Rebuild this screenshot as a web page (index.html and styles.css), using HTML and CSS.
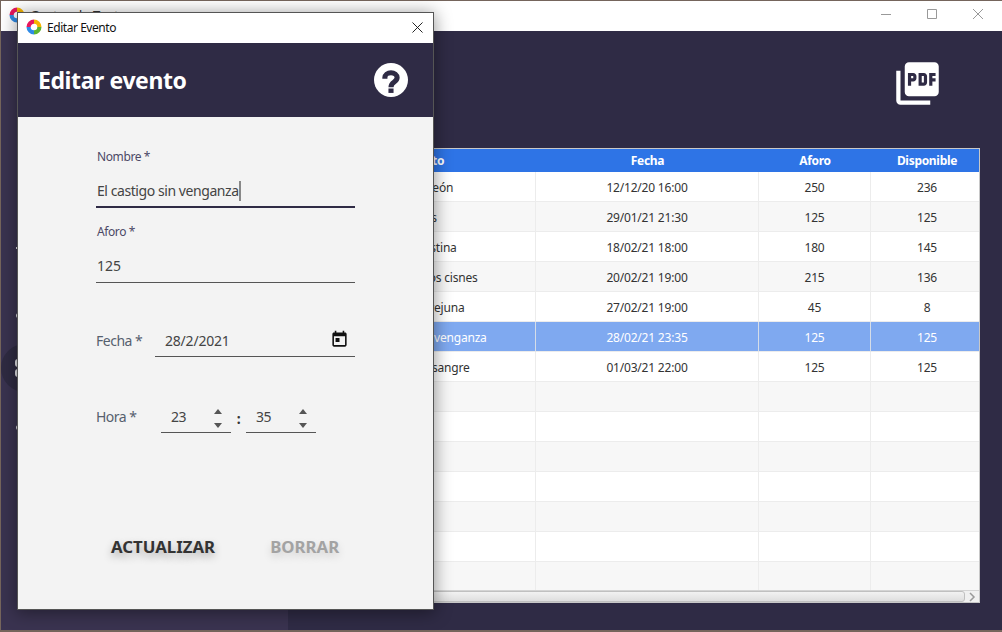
FILE: index.html
```html
<!DOCTYPE html>
<html lang="es">
<head>
<meta charset="utf-8">
<title>Editar Evento</title>
<link rel="stylesheet" href="styles.css">
</head>
<body>
<div class="window">
  <div class="titlebar">
    <svg class="app-icon" viewBox="0 0 16 16"><path d="M2.600 8A5.400 5.400 0 0 1 8 2.600" stroke="#e8175d"/><path d="M8 2.600A5.400 5.400 0 0 1 13.400 8" stroke="#f7b500"/><path d="M13.400 8A5.400 5.400 0 0 1 8 13.400" stroke="#5cb531"/><path d="M8 13.400A5.400 5.400 0 0 1 2.600 8" stroke="#2f8be6"/></svg>
    <span class="window-name">Gestor de Teatro</span>
    <div class="window-buttons">
      <svg viewBox="0 0 46 16"><path d="M17 7.500H27"/></svg>
      <svg viewBox="0 0 46 16"><path d="M17.500 2.500H26.500V11.500H17.500Z"/></svg>
      <svg viewBox="0 0 46 16"><path d="M17 2L27 12M27 2L17 12"/></svg>
    </div>
  </div>
  <div class="main">
    <nav class="sidebar">
      <span class="mark mark-small"></span>
      <span class="mark mark-medium"></span>
      <div class="active-item">
        <span class="blob"></span>
        <span class="blob"></span>
      </div>
      <span class="mark mark-last"></span>
    </nav>
    <section class="content">
      <div class="toolbar">
        <svg class="pdf-icon" viewBox="0 0 24 24"><path d="M20 2H8c-1.100 0-2 .9-2 2v12c0 1.100.9 2 2 2h12c1.100 0 2-.9 2-2V4c0-1.100-.9-2-2-2zm-8.500 7.500c0 .83-.67 1.500-1.500 1.500H9v2H7.500V7H10c.83 0 1.500.67 1.500 1.500v1zm5 2c0 .83-.67 1.500-1.500 1.500h-2.500V7H15c.83 0 1.500.67 1.500 1.500v3zm4-3H19v1h1.500V11H19v2h-1.500V7h3v1.500zM9 9.500h1v-1H9v1zM4 6H2v14c0 1.100.9 2 2 2h14v-2H4V6zm10 5.500h1v-3h-1v3z"/></svg>
      </div>
      <div class="table-box">
        <div class="table-wrap">
          <table class="events">
            <colgroup><col class="col-name"><col class="col-date"><col class="col-cap"><col class="col-free"></colgroup>
            <thead>
              <tr><th>Evento</th><th>Fecha</th><th>Aforo</th><th>Disponible</th></tr>
            </thead>
            <tbody>
              <tr><td>Pigmaleón</td><td>12/12/20 16:00</td><td>250</td><td>236</td></tr>
              <tr><td>Aves</td><td>29/01/21 21:30</td><td>125</td><td>125</td></tr>
              <tr><td>La Celestina</td><td>18/02/21 18:00</td><td>180</td><td>145</td></tr>
              <tr><td>El lago de los cisnes</td><td>20/02/21 19:00</td><td>215</td><td>136</td></tr>
              <tr><td>Fuenteovejuna</td><td>27/02/21 19:00</td><td>45</td><td>8</td></tr>
              <tr class="selected"><td>El castigo sin venganza</td><td>28/02/21 23:35</td><td>125</td><td>125</td></tr>
              <tr><td>Bodas de sangre</td><td>01/03/21 22:00</td><td>125</td><td>125</td></tr>
              <tr><td></td><td></td><td></td><td></td></tr>
              <tr><td></td><td></td><td></td><td></td></tr>
              <tr><td></td><td></td><td></td><td></td></tr>
              <tr><td></td><td></td><td></td><td></td></tr>
              <tr><td></td><td></td><td></td><td></td></tr>
              <tr><td></td><td></td><td></td><td></td></tr>
              <tr><td></td><td></td><td></td><td></td></tr>
            </tbody>
          </table>
        </div>
        <div class="scrollbar">
          <div class="scroll-thumb"></div>
          <svg class="scroll-arrow" viewBox="0 0 8 10"><path d="M2 1L6 5L2 9"/></svg>
        </div>
      </div>
    </section>
  </div>
</div>

<div class="dialog">
  <div class="dialog-bar">
    <svg class="app-icon" viewBox="0 0 16 16"><path d="M2.600 8A5.400 5.400 0 0 1 8 2.600" stroke="#e8175d"/><path d="M8 2.600A5.400 5.400 0 0 1 13.400 8" stroke="#f7b500"/><path d="M13.400 8A5.400 5.400 0 0 1 8 13.400" stroke="#5cb531"/><path d="M8 13.400A5.400 5.400 0 0 1 2.600 8" stroke="#2f8be6"/></svg>
    <span class="dialog-name">Editar Evento</span>
    <svg class="dialog-close" viewBox="0 0 12 12"><path d="M.5 .5L11.500 11.500M11.500 .5L.5 11.500"/></svg>
  </div>
  <header class="dialog-head">
    <h1>Editar evento</h1>
    <svg class="help-icon" viewBox="2 2 20 20"><circle cx="12" cy="12" r="10" fill="#fff"/><path class="help-mark" d="M8.400 11.200V10.600a3.600 2.900 0 0 1 7.200 0c0 2.800-3.600 2.400-3.600 5.600"/><rect class="help-dot" x="10.500" y="17" width="3" height="2.600"/></svg>
  </header>
  <form class="dialog-body">
    <div class="field">
      <label>Nombre *</label>
      <div class="value focused">El castigo sin venganza<span class="caret"></span></div>
    </div>
    <div class="field">
      <label>Aforo *</label>
      <div class="value">125</div>
    </div>
    <div class="row row-date">
      <span class="row-label">Fecha *</span>
      <div class="date-input">
        <span>28/2/2021</span>
        <svg class="calendar" viewBox="0 0 24 24"><path d="M19 3h-1V1h-2v2H8V1H6v2H5c-1.110 0-1.990.9-1.990 2L3 19c0 1.100.89 2 2 2h14c1.100 0 2-.9 2-2V5c0-1.100-.9-2-2-2zm0 16H5V8h14v11zM7 10h5v5H7z"/></svg>
      </div>
    </div>
    <div class="row row-time">
      <span class="row-label">Hora *</span>
      <div class="spinner">
        <span>23</span>
        <div class="arrows"><i class="up"></i><i class="down"></i></div>
      </div>
      <b class="colon">:</b>
      <div class="spinner">
        <span>35</span>
        <div class="arrows"><i class="up"></i><i class="down"></i></div>
      </div>
    </div>
    <div class="actions">
      <span class="btn">ACTUALIZAR</span>
      <span class="btn btn-off">BORRAR</span>
    </div>
  </form>
</div>
</body>
</html>
```

FILE: styles.css
```css
* {
    box-sizing: border-box;
}
html, body {
    height: 100%;
}
body {
    margin: 0;
    padding: 1px 0 2px 1px;
    overflow: hidden;
    background: #75655c;
    font-family: "Noto Sans", "Open Sans", sans-serif;
}
svg {
    display: block;
}

/* main window */
.window {
    height: 100%;
    display: flex;
    flex-direction: column;
}
.titlebar {
    height: 30px;
    flex: none;
    display: flex;
    align-items: center;
    padding: 0 0 2px 8px;
    background: #fff;
}
.app-icon {
    width: 16px;
    height: 16px;
    flex: none;
    fill: none;
    stroke-width: 4.2;
}
.window-name {
    margin-left: 5px;
    font-size: 13px;
    color: #333;
}
.window-buttons {
    margin-left: auto;
    display: flex;
}
.window-buttons svg {
    width: 46px;
    height: 16px;
    fill: none;
    stroke: #999;
    stroke-width: 1;
}
.main {
    flex: 1;
    display: flex;
    min-height: 0;
}
.sidebar {
    width: 287px;
    flex: none;
    display: flex;
    flex-direction: column;
    padding-top: 216px;
    background: #3a3350;
}
.mark {
    display: block;
    margin-left: 15px;
    background: #e4e4e8;
}
.mark-small {
    width: 6px;
    height: 2px;
}
.mark-medium {
    width: 6px;
    height: 5px;
    margin-top: 64px;
    border-radius: 3px;
}
.active-item {
    width: 48px;
    height: 48px;
    margin-top: 26px;
    padding: 15px 0 0 14px;
    border-radius: 50%;
    background: #2f2b42;
}
.blob {
    display: block;
    width: 8px;
    height: 8px;
    margin-bottom: 2px;
    border-radius: 3px;
    background: #e4e4e8;
}
.mark-last {
    width: 6px;
    height: 5px;
    margin-top: 33px;
    border-radius: 3px;
}
.content {
    flex: 1;
    min-width: 0;
    display: flex;
    flex-direction: column;
    padding: 0 22px 27px 22px;
    background: #2f2b45;
}
.toolbar {
    height: 117px;
    flex: none;
    padding: 27px 0 0 582px;
}
.pdf-icon {
    width: 51px;
    height: 51px;
    fill: #fff;
}

/* table */
.table-box {
    flex: 1;
    min-height: 0;
    display: flex;
    flex-direction: column;
    border: 1px solid #c8c8c8;
    background: #fff;
}
.table-wrap {
    flex: 1;
    min-height: 0;
    overflow: hidden;
}
.events {
    width: 100%;
    table-layout: fixed;
    border-collapse: separate;
    border-spacing: 0;
    font-size: 12px;
    letter-spacing: -.2px;
    color: #333;
}
.col-name {
    width: 225px;
}
.col-date {
    width: 223px;
}
.col-cap {
    width: 112px;
}
th {
    height: 23px;
    padding: 0;
    background: #2e74e6;
    color: #fff;
    font-weight: 700;
    letter-spacing: -.3px;
}
th:first-child {
    padding-left: 2px;
}
th:last-child {
    padding-left: 4px;
}
td {
    height: 30px;
    padding: 1px 0 0;
    text-align: center;
    border-right: 1px solid #ececec;
    border-bottom: 1px solid #ececec;
}
td:first-child {
    padding-left: 2px;
}
td:last-child {
    padding-left: 4px;
    border-right: 0;
}
tbody tr:nth-child(even) {
    background: #f7f7f7;
}
tbody tr.selected {
    background: #7fa9f0;
    color: #fff;
}
.selected td {
    border-right-color: #d5dde8;
}
.scrollbar {
    height: 12px;
    flex: none;
    display: flex;
    align-items: center;
    border-top: 1px solid #d4d4d4;
    background: #f0f0f0;
}
.scroll-thumb {
    flex: 1;
    height: 11px;
    border: 1px solid #c0c0c0;
    border-radius: 3px;
    background: linear-gradient(#f2f2f2, #dedede);
}
.scroll-arrow {
    width: 14px;
    height: 10px;
    flex: none;
    fill: none;
    stroke: #999;
    stroke-width: 1.500;
}

/* dialog, a window lying over the main one */
.dialog {
    position: absolute;
    left: 18px;
    top: 13px;
    width: 415px;
    height: 596px;
    display: flex;
    flex-direction: column;
    background: #f3f3f3;
    box-shadow: 0 0 0 1px #555, 0 2px 16px 2px rgba(0, 0, 0, .4);
}
.dialog-bar {
    height: 30px;
    flex: none;
    display: flex;
    align-items: center;
    padding: 0 10px 2px 8px;
    background: #fff;
}
.dialog-name {
    margin-left: 5px;
    font-size: 12px;
    letter-spacing: -.45px;
    color: #111;
}
.dialog-close {
    width: 11px;
    height: 11px;
    margin-left: auto;
    fill: none;
    stroke: #111;
    stroke-width: 1;
}
.dialog-head {
    height: 74px;
    flex: none;
    display: flex;
    align-items: center;
    justify-content: space-between;
    padding: 0 25px 0 20px;
    background: #2f2b45;
}
.dialog-head h1 {
    margin: 0;
    font-size: 23px;
    font-weight: 700;
    letter-spacing: -.4px;
    color: #fff;
}
.help-icon {
    width: 34px;
    height: 34px;
}
.help-mark {
    fill: none;
    stroke: #2f2b45;
    stroke-width: 3;
}
.help-dot {
    fill: #2f2b45;
}
.dialog-body {
    flex: 1;
    display: flex;
    flex-direction: column;
    padding: 31px 78px 0;
    color: #444;
}
.field {
    display: flex;
    flex-direction: column;
}
.field label {
    height: 17px;
    padding-left: 1px;
    font-size: 12px;
    line-height: 17px;
    letter-spacing: -.4px;
    color: #4c4966;
}
.value {
    height: 33px;
    margin-top: 10px;
    padding: 6px 0 0 1px;
    border-bottom: 1px solid #555;
    font-size: 14px;
    line-height: 19px;
    color: #444;
}
.value.focused {
    margin-bottom: 15px;
    border-bottom: 2px solid #2f2b45;
    letter-spacing: -.43px;
}
.caret {
    display: inline-block;
    width: 2px;
    height: 20px;
    vertical-align: top;
    background: #888;
}
.row {
    display: flex;
    font-size: 14px;
    letter-spacing: -.5px;
    color: #56606e;
}
.row-label {
    line-height: 20px;
}
.row-date {
    align-items: flex-end;
    margin-top: 48px;
    justify-content: space-between;
}
.date-input {
    width: 200px;
    height: 26px;
    display: flex;
    justify-content: space-between;
    padding: 0 6px 0 10px;
    border-bottom: 1px solid #555;
    line-height: 20px;
    letter-spacing: -.2px;
    color: #444;
}
.calendar {
    width: 19px;
    height: 19px;
    margin-top: -1px;
    fill: #111;
}
.row-date .row-label {
    margin-bottom: 6px;
}
.row-time {
    align-items: flex-end;
    margin-top: 50px;
}
.row-time .row-label {
    width: 65px;
    margin-bottom: 6px;
}
.spinner {
    width: 70px;
    height: 26px;
    display: flex;
    justify-content: space-between;
    padding: 0 9px 0 10px;
    border-bottom: 1px solid #555;
    line-height: 20px;
    color: #444;
}
.arrows {
    display: flex;
    flex-direction: column;
    gap: 9px;
    padding-top: 2px;
}
.arrows i {
    display: block;
    width: 0;
    height: 0;
    border-left: 4px solid transparent;
    border-right: 4px solid transparent;
}
.arrows .up {
    border-bottom: 5px solid #555;
}
.arrows .down {
    border-top: 5px solid #555;
}
.colon {
    width: 15px;
    margin-bottom: 4px;
    text-align: center;
    line-height: 20px;
    color: #333;
}
.actions {
    display: flex;
    gap: 55px;
    margin-top: 102px;
    padding-left: 15px;
}
.btn {
    font-size: 16.8px;
    font-weight: 700;
    color: #333;
    text-shadow: 0 4px 8px rgba(0, 0, 0, .3);
}
.btn-off {
    color: #a3a3a3;
    text-shadow: 0 4px 8px rgba(0, 0, 0, .15);
}
```
